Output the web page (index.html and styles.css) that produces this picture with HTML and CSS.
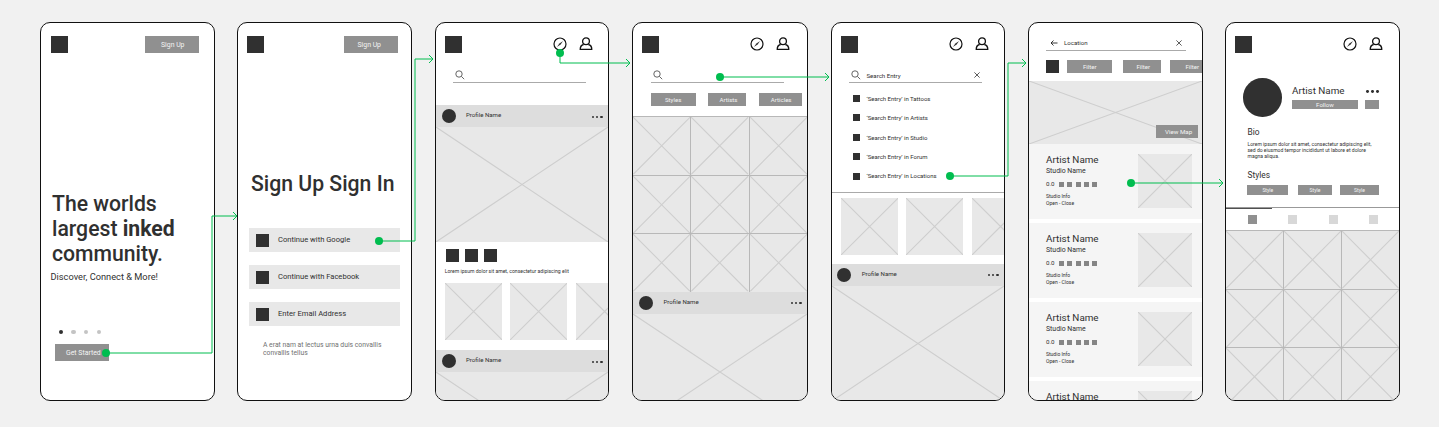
FILE: index.html
```html
<!DOCTYPE html>
<html lang="en">
<head>
<meta charset="utf-8">
<title>Inked wireflow</title>
<link rel="stylesheet" href="styles.css">
</head>
<body>
<svg class="defs" aria-hidden="true">
  <symbol id="compass" viewBox="0 0 14 14"><circle cx="7" cy="7" r="6" fill="none" stroke="#111" stroke-width="1.2"/><path d="M3.9 10.1 6.4 6.4 10.1 3.9 7.6 7.6Z" fill="#333"/></symbol>
  <symbol id="person" viewBox="0 0 14 14"><g fill="none" stroke="#111" stroke-width="1.3" stroke-linejoin="round"><circle cx="7" cy="4.3" r="3.4"/><path d="M4.6 7.5C2.4 8 1.2 9.3 1.2 12.4H12.8C12.8 9.3 11.6 8 9.4 7.5"/></g></symbol>
  <symbol id="search" viewBox="0 0 10 10"><g fill="none" stroke="#555" stroke-width=".9"><circle cx="4" cy="4" r="3.2"/><path d="M6.4 6.4 9.2 9.2"/></g></symbol>
  <symbol id="close" viewBox="0 0 6 6"><path d="M.4.4 5.6 5.6M5.6.4.4 5.6" stroke="#333" stroke-width=".8"/></symbol>
  <symbol id="back" viewBox="0 0 8 6"><path d="M7.5 3H1M3.5.5 1 3 3.5 5.5" fill="none" stroke="#222" stroke-width=".9"/></symbol>
  <symbol id="cross" viewBox="0 0 100 100" preserveAspectRatio="none"><path d="M0 0 100 100M100 0 0 100" stroke="#cecece" stroke-width="1.1" vector-effect="non-scaling-stroke"/></symbol>
</svg>

<main class="board">

  <section class="phone welcome">
    <header class="top"><i class="logo"></i><span class="btn">Sign Up</span></header>
    <h1>The worlds<br>largest <b>inked</b><br>community.</h1>
    <p class="tagline">Discover, Connect &amp; More!</p>
    <div class="pager"><i class="on"></i><i></i><i></i><i></i></div>
    <span class="btn start">Get Started</span>
  </section>

  <section class="phone signin">
    <header class="top"><i class="logo"></i><span class="btn">Sign Up</span></header>
    <h1>Sign Up Sign In</h1>
    <div class="options">
      <div class="option"><i></i><span>Continue with Google</span></div>
      <div class="option"><i></i><span>Continue with Facebook</span></div>
      <div class="option"><i></i><span>Enter Email Address</span></div>
    </div>
    <p class="note">A erat nam at lectus urna duis convallis<br>convallis tellus</p>
  </section>

  <section class="phone feed">
    <header class="top"><i class="logo"></i><svg class="compass"><use href="#compass"/></svg><svg class="person"><use href="#person"/></svg></header>
    <div class="searchbar"><svg class="glass"><use href="#search"/></svg></div>
    <div class="profile"><i class="avatar"></i><span>Profile Name</span><b class="dots"><i></i><i></i><i></i></b></div>
    <svg class="photo"><use href="#cross"/></svg>
    <div class="actions"><i></i><i></i><i></i></div>
    <p class="caption">Lorem ipsum dolor sit amet, consectetur adipiscing elit</p>
    <div class="cards"><svg><use href="#cross"/></svg><svg><use href="#cross"/></svg><svg><use href="#cross"/></svg></div>
    <div class="profile"><i class="avatar"></i><span>Profile Name</span><b class="dots"><i></i><i></i><i></i></b></div>
    <svg class="photo"><use href="#cross"/></svg>
  </section>

  <section class="phone explore">
    <header class="top"><i class="logo"></i><svg class="compass"><use href="#compass"/></svg><svg class="person"><use href="#person"/></svg></header>
    <div class="searchbar"><svg class="glass"><use href="#search"/></svg></div>
    <div class="chips"><span class="styles">Styles</span><span class="artists">Artists</span><span class="articles">Articles</span></div>
    <div class="gallery">
      <svg><use href="#cross"/></svg><svg><use href="#cross"/></svg><svg><use href="#cross"/></svg>
      <svg><use href="#cross"/></svg><svg><use href="#cross"/></svg><svg><use href="#cross"/></svg>
      <svg><use href="#cross"/></svg><svg><use href="#cross"/></svg><svg><use href="#cross"/></svg>
    </div>
    <div class="profile"><i class="avatar"></i><span>Profile Name</span><b class="dots"><i></i><i></i><i></i></b></div>
    <svg class="photo"><use href="#cross"/></svg>
  </section>

  <section class="phone results">
    <header class="top"><i class="logo"></i><svg class="compass"><use href="#compass"/></svg><svg class="person"><use href="#person"/></svg></header>
    <div class="searchbar"><svg class="glass"><use href="#search"/></svg><span>Search Entry</span><svg class="close"><use href="#close"/></svg></div>
    <ul class="suggestions">
      <li><i></i>‘Search Entry’ in Tattoos</li>
      <li><i></i>‘Search Entry’ in Artists</li>
      <li><i></i>‘Search Entry’ in Studio</li>
      <li><i></i>‘Search Entry’ in Forum</li>
      <li><i></i>‘Search Entry’ in Locations</li>
    </ul>
    <div class="cards"><svg><use href="#cross"/></svg><svg><use href="#cross"/></svg><svg><use href="#cross"/></svg></div>
    <div class="profile"><i class="avatar"></i><span>Profile Name</span><b class="dots"><i></i><i></i><i></i></b></div>
    <svg class="photo"><use href="#cross"/></svg>
  </section>

  <section class="phone places">
    <div class="searchbar"><svg class="back"><use href="#back"/></svg><span>Location</span><svg class="close"><use href="#close"/></svg></div>
    <div class="filters"><i></i><span class="f1">Filter</span><span class="f2">Filter</span><span class="f3">Filter</span></div>
    <div class="map"><svg><use href="#cross"/></svg><span>View Map</span></div>
    <div class="list">
      <article><div><h2>Artist Name</h2><h3>Studio Name</h3><p class="rating">0.0<i></i><i></i><i></i><i></i><i></i></p><p class="info">Studio Info<br>Open - Close</p></div><svg><use href="#cross"/></svg></article>
      <article><div><h2>Artist Name</h2><h3>Studio Name</h3><p class="rating">0.0<i></i><i></i><i></i><i></i><i></i></p><p class="info">Studio Info<br>Open - Close</p></div><svg><use href="#cross"/></svg></article>
      <article><div><h2>Artist Name</h2><h3>Studio Name</h3><p class="rating">0.0<i></i><i></i><i></i><i></i><i></i></p><p class="info">Studio Info<br>Open - Close</p></div><svg><use href="#cross"/></svg></article>
      <article><div><h2>Artist Name</h2></div><svg><use href="#cross"/></svg></article>
    </div>
  </section>

  <section class="phone artist">
    <header class="top"><i class="logo"></i><svg class="compass"><use href="#compass"/></svg><svg class="person"><use href="#person"/></svg></header>
    <div class="intro">
      <i class="portrait"></i>
      <div class="who">
        <div class="name"><h2>Artist Name</h2><b class="dots"><i></i><i></i><i></i></b></div>
        <div class="follow"><span>Follow</span><i></i></div>
      </div>
    </div>
    <h4 class="bio">Bio</h4>
    <p class="about">Lorem ipsum dolor sit amet, consectetur adipiscing elit,<br>sed do eiusmod tempor incididunt ut labore et dolore<br>magna aliqua.</p>
    <h4>Styles</h4>
    <div class="tags"><span class="t1">Style</span><span class="t2">Style</span><span class="t3">Style</span></div>
    <div class="tabs"><i class="on"></i><i></i><i></i><i></i></div>
    <div class="gallery">
      <svg><use href="#cross"/></svg><svg><use href="#cross"/></svg><svg><use href="#cross"/></svg>
      <svg><use href="#cross"/></svg><svg><use href="#cross"/></svg><svg><use href="#cross"/></svg>
      <svg><use href="#cross"/></svg><svg><use href="#cross"/></svg><svg><use href="#cross"/></svg>
    </div>
  </section>
</main>

<svg class="flows" viewBox="0 0 1439 427">
  <g class="wire">
    <path d="M106 353H212V216H237M233 212L237 216L233 220"/>
    <path d="M379 241H415V59H433M429 55L433 59L429 63"/>
    <path d="M560 53V63H630M626 59L630 63L626 67"/>
    <path d="M720 77H829M825 73L829 77L825 81"/>
    <path d="M950 176H1008V63H1026M1022 59L1026 63L1022 67"/>
    <path d="M1131 183H1223M1219 179L1223 183L1219 187"/>
  </g>
  <g class="node">
    <circle cx="106" cy="353" r="4"/><circle cx="379" cy="241" r="4"/><circle cx="560" cy="53" r="4"/>
    <circle cx="720" cy="77" r="4"/><circle cx="950" cy="176" r="4"/><circle cx="1131" cy="183" r="4"/>
  </g>
</svg>
</body>
</html>
```

FILE: styles.css
```css
* { box-sizing: border-box; margin: 0; padding: 0; }
body { width: 1439px; height: 427px; overflow: hidden; background: #f1f1f1; color: #303030; font-family: Roboto, sans-serif; position: relative; }
i { display: block; font-style: normal; flex: none; }
svg { display: block; flex: none; }
span, h1, h2, h3, h4, p { white-space: nowrap; }
h2, h3, h4 { font-weight: 400; }
.defs { position: absolute; width: 0; height: 0; }
.flows { position: absolute; left: 0; top: 0; width: 1439px; height: 427px; }
.wire { fill: none; stroke: #00bd4f; stroke-width: 1; }
.node { fill: #00bd4f; }

.board { display: flex; gap: 22px; padding: 22px 0 0 40px; }
.phone { width: 175px; height: 379px; flex: none; display: flex; flex-direction: column; overflow: hidden; background: #fff; border: 1px solid #111; border-radius: 10px; }
.phone > * { flex: none; }
.feed, .explore, .results, .places { margin-left: 1px; }
.feed, .results { width: 174px; }
.explore { width: 176px; }

/* Header row */
.top { display: flex; height: 30px; padding: 13px 0 0 9px; }
.logo { width: 17px; height: 17px; background: #303030; }
.btn { width: 54px; height: 17px; background: #909090; color: #f4f4f4; font-size: 6.9px; line-height: 18px; }
.top .btn { margin-left: 80px; padding-left: 13.5px; }
.compass, .person { width: 14px; height: 14px; }
.compass { margin: 1.3px 0 0 90.7px; }
.person { margin: 1px 0 0 12.7px; }
h1 { font-size: 21.2px; line-height: 25px; font-weight: 500; }

/* Welcome */
.welcome .top { padding-left: 10px; }
.welcome .top .btn { margin-left: 77px; padding-left: 16px; }
.welcome h1 { margin: 138px 0 0 11px; }
.tagline { margin: 5px 0 0 9.5px; font-size: 9.25px; line-height: 12px; }
.pager { display: flex; gap: 8.3px; margin: 47px 0 0 17.5px; }
.pager i { width: 4.4px; height: 4.4px; border-radius: 50%; background: #c4c4c4; }
.pager .on { background: #303030; }
.start { margin: 9.6px 0 0 14px; padding-left: 11px; }

/* Sign in */
.signin h1 { margin: 117.5px 0 0 13px; }
.options { display: grid; gap: 13.6px; margin: 32.8px 0 0 11px; width: 150.5px; }
.option { display: flex; align-items: center; height: 23.5px; padding-left: 6.5px; background: #e8e8e8; font-size: 7.6px; }
.option i { width: 13px; height: 13px; margin-right: 9.5px; background: #303030; }
.option span { line-height: 10px; margin-top: -1px; }
.note { margin: 14.6px 0 0 25px; font-size: 6.8px; line-height: 8px; color: #707070; }

/* Search field */
.searchbar { display: flex; align-items: center; width: 133px; height: 15px; margin: 15px 0 0 17px; padding-left: 2px; border-bottom: 1px solid #aaa; font-size: 6.1px; line-height: 8px; }
.glass { width: 10px; height: 10px; }
.close { width: 6px; height: 6px; }
.searchbar span { padding-top: 1px; }

/* Profile strip */
.profile { display: flex; height: 22px; padding-left: 6px; background: #ddd; font-size: 6.1px; line-height: 20.5px; }
.avatar { width: 14px; height: 14px; margin: 4px 10px 0 0; border-radius: 50%; background: #303030; }
.dots { display: flex; gap: 2.1px; }
.dots i { width: 2.1px; height: 2.1px; border-radius: 50%; background: #303030; }
.profile .dots { margin: 10.8px 5.5px 0 auto; }
.photo { width: 100%; height: 115px; background: #e8e8e8; }
.cards { display: flex; gap: 8.3px; height: 57px; margin-left: 8.7px; }
.cards svg { width: 57.2px; height: 57px; background: #e8e8e8; }

/* Feed */
.feed .profile { margin-top: 22px; }
.feed .photo + .actions { margin-top: 7px; }
.actions { display: flex; gap: 6px; margin-left: 10px; }
.actions i { width: 13px; height: 13px; background: #303030; }
.caption { margin: 5.3px 0 0 8.7px; font-size: 5.1px; line-height: 8px; }
.feed .cards { margin-top: 7.7px; }
.feed .cards + .profile { margin-top: 10px; }

/* Explore */
.explore .searchbar { margin-left: 18px; }
.explore .photo { height: 116px; }
.chips { display: flex; margin: 10px 0 0 18px; height: 13px; color: #f4f4f4; font-size: 6.1px; line-height: 14px; }
.chips span { background: #909090; }
.styles { width: 45px; padding-left: 14px; }
.artists { width: 38px; margin-left: 12px; padding-left: 11.5px; }
.articles { width: 43px; margin-left: 12.5px; padding-left: 12.3px; }
.gallery { display: grid; grid-template-columns: repeat(3, 1fr); grid-auto-rows: 57.5px; gap: 1px; background: #b8b8b8; }
.gallery svg { width: 100%; height: 100%; background: #e8e8e8; }
.explore .gallery { margin-top: 10px; padding-top: 1px; }
.explore .avatar { margin-right: 10.5px; }
.explore .profile { margin-top: 0; }

/* Search results */
.results .searchbar span { margin-left: 5.5px; }
.results .searchbar .close { margin-left: auto; margin-right: 2.5px; }
.suggestions { list-style: none; height: 110px; padding: 5.9px 0 0 21px; border-bottom: 1px solid #aaa; font-size: 6px; line-height: 19.4px; }
.suggestions li { display: flex; align-items: center; height: 19.4px; }
.suggestions i { width: 7px; height: 7px; margin-right: 6.5px; background: #303030; }
.results .cards { margin-top: 5px; }
.results .profile { margin-top: 8.5px; padding-left: 5px; }
.results .avatar { margin-right: 10.7px; }

/* Places */
.places .searchbar { width: 140px; height: 14px; margin: 13.5px 0 0 17px; padding-left: 3.5px; font-size: 6.1px; }
.back { width: 8px; height: 6px; }
.places .searchbar span { margin-left: 6.5px; padding-top: 0; }
.places .searchbar .close { margin-left: auto; margin-right: 4.5px; }
.filters { display: flex; height: 13px; margin: 9px 0 0 17px; color: #f4f4f4; font-size: 6.1px; line-height: 13px; }
.filters i { width: 13px; background: #303030; }
.filters span { flex: none; background: #909090; }
.f1 { width: 45px; margin-left: 8px; padding-left: 16px; }
.f2 { width: 38px; margin-left: 11px; padding-left: 13.5px; }
.f3 { width: 43px; margin-left: 8.5px; padding-left: 16px; }
.map { display: grid; height: 63px; margin-top: 8.5px; background: #e8e8e8; }
.map > * { grid-area: 1 / 1; }
.map svg { width: 100%; height: 63px; }
.map span { z-index: 1; justify-self: end; align-self: end; width: 42.5px; height: 13px; margin: 0 4px 6px 0; padding-left: 9.5px; background: #909090; color: #f4f4f4; font-size: 6.2px; line-height: 14px; }
.list { display: grid; gap: 4px; }
.list article { display: flex; justify-content: space-between; height: 75px; padding: 10px 10px 0 17px; background: #f5f5f5; }
.list svg { width: 54px; height: 54px; background: #e8e8e8; }
h2 { font-size: 9.85px; line-height: 12px; }
h3 { margin-top: 1px; font-size: 6.9px; line-height: 9px; }
.rating { display: flex; align-items: center; height: 7px; margin-top: 5px; font-size: 6.2px; line-height: 7px; }
.rating i { width: 5px; height: 5px; margin-left: 3.4px; background: #858585; }
.rating i:first-of-type { margin-left: 4.3px; }
.info { margin-top: 5px; font-size: 5px; line-height: 7.3px; }

/* Artist */
.intro { display: flex; margin: 25.3px 0 0 17.3px; }
.portrait { width: 38.5px; height: 38.5px; border-radius: 50%; background: #303030; }
.who { width: 87px; margin: 6.7px 0 0 10.2px; }
.name { display: flex; justify-content: space-between; }
.name .dots { gap: 2.3px; padding-top: 5px; }
.name .dots i { width: 2.8px; height: 2.8px; }
.follow { display: flex; justify-content: space-between; height: 9px; margin-top: 3px; color: #f4f4f4; font-size: 6.1px; line-height: 9px; }
.follow span { width: 66px; background: #909090; text-align: center; }
.follow i { width: 14px; background: #909090; }
h4 { margin-left: 21.5px; font-size: 8.4px; line-height: 11px; }
h4.bio { margin-top: 10.3px; }
.about { margin: 3.2px 0 0 21.5px; font-size: 5.05px; line-height: 6px; }
.about + h4 { margin-top: 10.5px; }
.tags { display: flex; height: 10px; margin: 4.3px 0 0 21.3px; color: #f4f4f4; font-size: 5px; line-height: 10px; text-align: center; }
.tags span { background: #909090; }
.t1 { width: 41px; }
.t2 { width: 34px; margin-left: 9.7px; }
.t3 { width: 39px; margin-left: 8px; }
.tabs { display: flex; justify-content: space-between; height: 23px; margin-top: 12px; padding: 7px 20.5px 0 21.5px; border-top: 1px solid #999; background: linear-gradient(#505050, #505050) 0 0 / 46px 1px no-repeat; }
.tabs i { width: 9px; height: 9px; background: #d8d8d8; }
.tabs .on { background: #909090; }
.artist .gallery { padding-top: 1px; }
```
